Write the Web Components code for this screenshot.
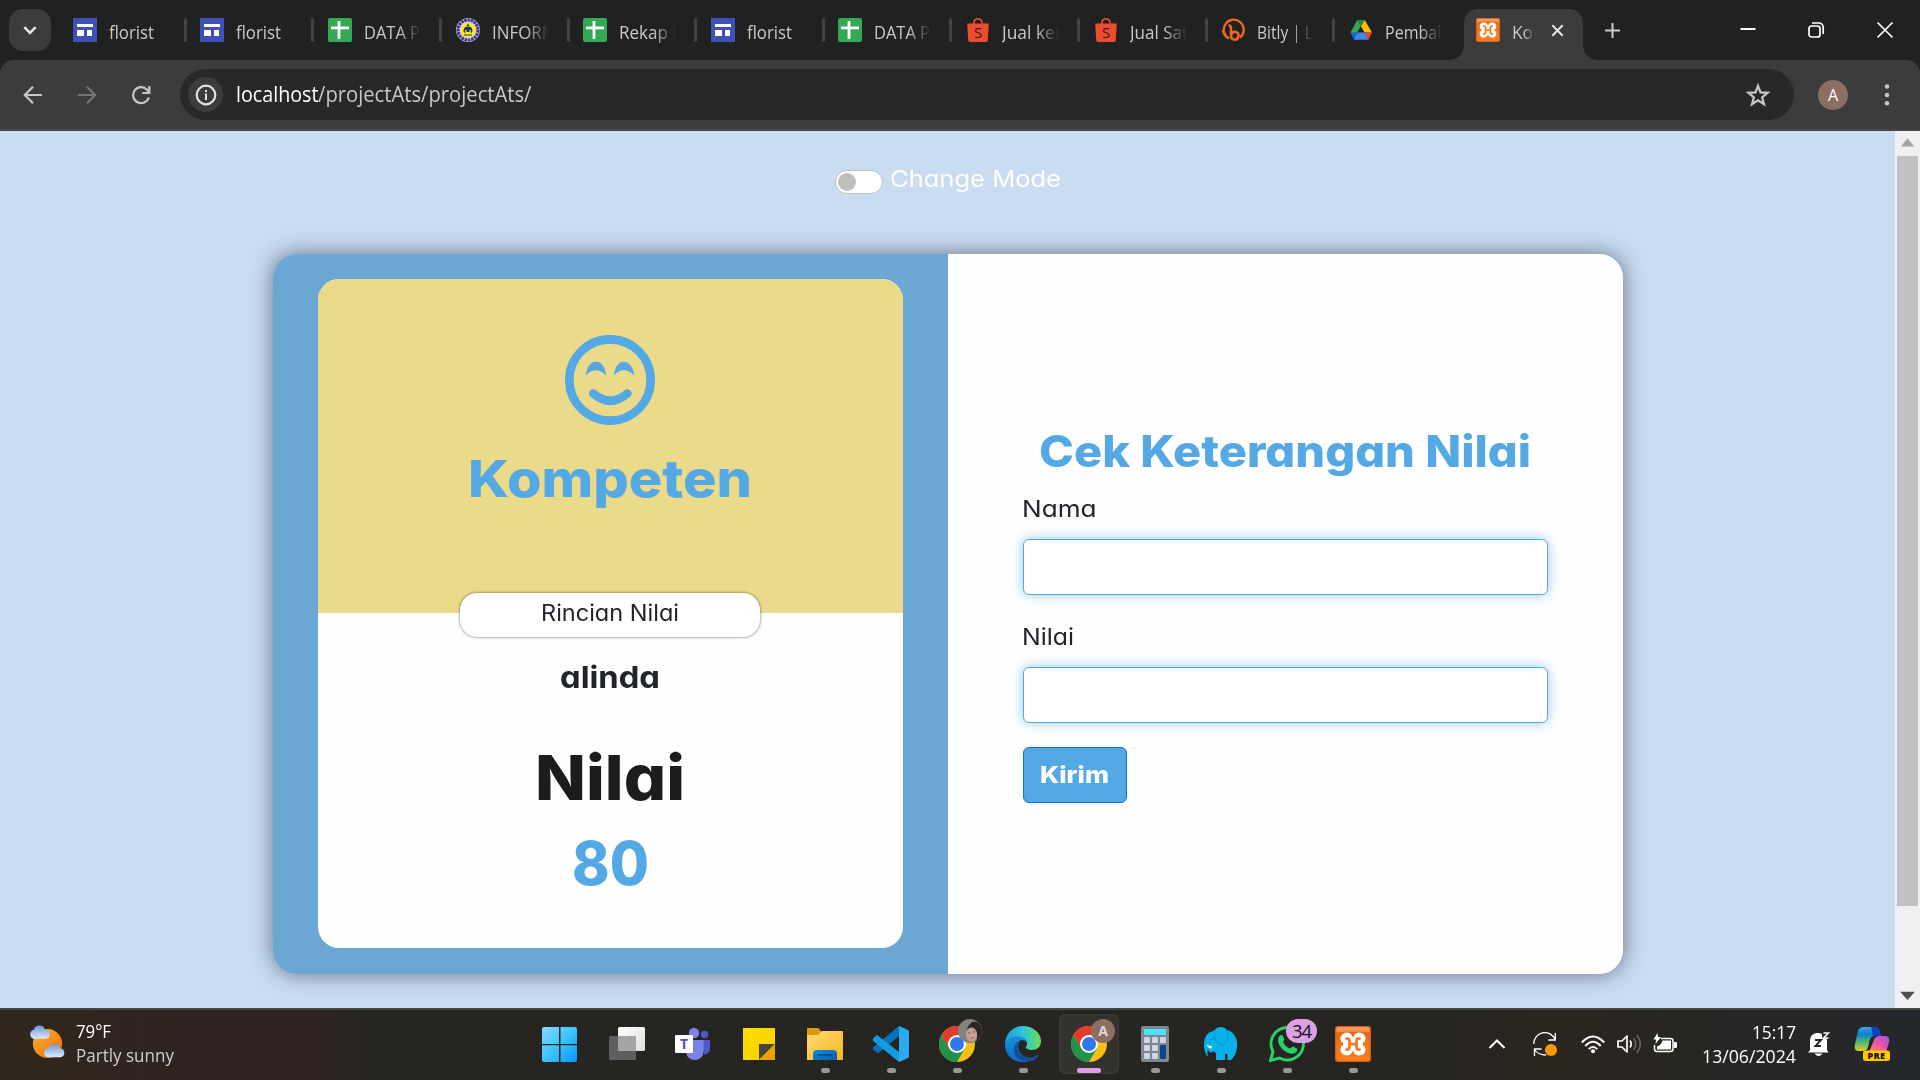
<!DOCTYPE html>
<html lang="id">
<head>
<meta charset="utf-8">
<title>Kompeten</title>
<style>
html,body{margin:0;padding:0;overflow:hidden}
body{width:1920px;height:1080px;font-family:"Open Sans","Noto Sans",sans-serif}
</style>
</head>
<body>
<desktop-screen></desktop-screen>
<script>
const define=(name,html,setup)=>customElements.define(name,class extends HTMLElement{
  connectedCallback(){
    if(this.shadowRoot)return;
    this.attachShadow({mode:'open'}).innerHTML=typeof html==='function'?html(this):html;
    if(setup)setup(this);
  }
});

const ICONS={
sites:[24,24,`<path fill="#4050b5" d="M0 0h24v24H0z"/><path fill="#fff" d="M4 6h16v3H4zM4 12h7v6H4zM14 12h5v6h-5z"/>`],
sheets:[24,24,`<rect width="24" height="24" rx="2" fill="#34a853"/><path fill="#fff" d="M9.600 3h2.800v18H9.600zM3 8.600h18v2.600H3z"/>`],
seal:[24,24,`<circle cx="12" cy="12" r="12" fill="#d9d4e6"/><circle cx="12" cy="12" r="10" fill="none" stroke="#41328c" stroke-width="3.2" stroke-dasharray="2.6 .7"/><circle cx="12" cy="12" r="7.3" fill="#f4ef10"/><path d="M7.500 13.500c0-4 2-5 4.500-5s4.500 1 4.500 5l-1.700 2v-3.500h-1.300v2h-3v-2H9.200v3.500zM12 5.500l1.500 2.500h-3z" fill="#28306b"/><path stroke="#28306b" d="M8 17h8"/>`],
shop:[24,24,`<path d="M7.500 6.500C8-1 16-1 16.500 6.500" fill="none" stroke="#ee4d2d" stroke-width="1.600"/><path d="M1.200 5.500h21.600l-1 16.600a2 2 0 0 1-2 1.900H4.200a2 2 0 0 1-2-1.900z" fill="#ee4d2d"/><text x="12" y="20" text-anchor="middle" font-family="Open Sans" font-size="15" fill="#27201f">S</text>`],
bit:[24,24,`<path d="M8 20.500A10 10 0 1 1 19 19.500M5.800 19.500C3.500 17 2 15 2 12" fill="none" stroke="#f26522" stroke-width="2.300"/><path d="M7.500 7.500c2.500-.5 2.600 2 2.500 5v5c0 5 6 5.500 7.300 1.500 1.500-5-4.300-7-7-3" fill="none" stroke="#f26522" stroke-width="2.500"/>`],
drive:[24,24,`<path fill="#34a853" d="m8.200 2 3.800 6.300-6.300 10L1.500 14.500z"/><path fill="#23883e" d="M8.200 2h7.500L12 8.300z"/><path fill="#fbbc04" d="M15.700 2 23 14.500h-7.400L12 8.300z"/><path fill="#4285f4" d="M8.200 14.500h7.400l3.800 7.300H4.900z"/><path fill="#1967d2" d="M1.500 14.500h6.700l-3.300 7.300z"/><path fill="#ea4335" d="M15.600 14.500H23l-3.600 7.300z"/>`],
xampp:[36,36,`<defs><linearGradient id="g" x2="0" y2="1"><stop stop-color="#f5a36b"/><stop offset=".14" stop-color="#f08a42"/><stop offset=".15" stop-color="#e56a16"/><stop offset="1" stop-color="#ff7f1f"/></linearGradient></defs><rect width="36" height="36" rx="3" fill="#d95f10"/><rect x="1.300" y="1.300" width="33.400" height="33.400" rx="2" fill="url(#g)"/><g fill="#fff"><circle cx="11.700" cy="12.800" r="6.200"/><circle cx="24.300" cy="12.800" r="6.200"/><circle cx="11.700" cy="23.400" r="6.200"/><circle cx="24.300" cy="23.400" r="6.200"/><path d="M8 13h20v11H8z"/></g><g fill="#f9771f"><path d="M4.500 18.200 8 15.900v4.600zM31.500 18.200 28 15.900v4.600z"/></g><path d="M11.500 12.600q2.800-.6 3 2.400v6.200q-.2 3-3 2.400M24.500 12.600q-2.800-.6-3 2.400v6.200q.2 3 3 2.400M14.500 18.100h7" fill="none" stroke="#f9771f" stroke-width="2.700" stroke-linecap="round"/>`],
down:[16,16,`<path d="m3 5.500 5 5 5-5" fill="none" stroke="#e3e3e3" stroke-width="2.300"/>`],
x:[16,16,`<path d="m2.500 2.500 11 11m0-11-11 11" fill="none" stroke="#e3e3e3" stroke-width="2.200"/>`],
plus:[18,18,`<path d="M9 1v16M1 9h16" fill="none" stroke="#c7c7c7" stroke-width="2.200"/>`],
min:[18,18,`<path d="M1.500 8h15" stroke="#fff" stroke-width="2"/>`],
restore:[18,18,`<rect x="2" y="5" width="11" height="11" rx="2.500" fill="none" stroke="#fff" stroke-width="1.700"/><path d="M5 2h7a4.200 4.200 0 0 1 4.200 4.200V13" fill="none" stroke="#fff" stroke-width="1.700"/>`],
close:[18,18,`<path d="m1.500 1.500 15 15m0-15-15 15" fill="none" stroke="#fff" stroke-width="1.700"/>`],
back:[20,20,`<path d="M19 10H2.500M10 1.800 1.800 10l8.200 8.200" fill="none" stroke="#c7c7c7" stroke-width="2.200"/>`],
fwd:[20,20,`<path d="M1 10h16.500M10 1.800l8.200 8.200-8.200 8.200" fill="none" stroke="#757575" stroke-width="2.200"/>`],
reload:[20,20,`<path d="M17.800 12.500A8 8 0 1 1 16 4.700L18 7" fill="none" stroke="#c7c7c7" stroke-width="2.200"/><path d="M18.300 1v7h-7" fill="none" stroke="#c7c7c7" stroke-width="2.200"/>`],
info:[22,22,`<circle cx="11" cy="11" r="9.300" fill="none" stroke="#e3e3e3" stroke-width="2.200"/><path d="M10 9.500h2V16h-2zM10 6h2v2h-2z" fill="#e3e3e3"/>`],
star:[24,24,`<path d="m12 2.800 2.500 6.600 7.100.4-5.500 4.500 1.900 6.900-6-3.900-6 3.900 1.900-6.900L2.400 9.800l7.100-.4z" fill="none" stroke="#c7c7c7" stroke-width="2.200"/>`],
dots:[6,24,`<g fill="#c7c7c7"><circle cx="3" cy="3.500" r="2.300"/><circle cx="3" cy="12" r="2.300"/><circle cx="3" cy="20.300" r="2.300"/></g>`],
smile:[90,90,`<circle cx="45" cy="45" r="40.700" fill="none" stroke="#54a9e5" stroke-width="8.700"/><path d="M21 40.500c1-18 18.500-18.500 20.300.3-5.500-7.500-15-7.500-20.300-.3zM49 40.500c1-18 18.500-18.500 20.300.3-5.500-7.500-15-7.500-20.300-.3z" fill="#54a9e5"/><path d="M28.300 58.500q17 14.500 34 0" fill="none" stroke="#54a9e5" stroke-width="8.700" stroke-linecap="round"/>`],
weather:[38,36,`<defs><linearGradient id="a" x2="1" y2="1"><stop stop-color="#f6b62b"/><stop offset="1" stop-color="#f06a0c"/></linearGradient><linearGradient id="b" x2="0" y2="1"><stop stop-color="#6f95d9"/><stop offset="1" stop-color="#dbe8fb"/></linearGradient></defs><circle cx="19" cy="19" r="15" fill="url(#a)"/><path d="M5 14a4.700 4.700 0 0 1 0-9.200A6 6 0 0 1 16.500 5 4.600 4.600 0 0 1 18 14z" fill="url(#b)"/><path d="M20 33a4.600 4.600 0 0 1 0-9.200 6 6 0 0 1 11.500.2A4.600 4.600 0 0 1 33 33z" fill="url(#b)"/>`],
win:[36,36,`<defs><linearGradient id="a" gradientUnits="userSpaceOnUse" x2="36" y2="36"><stop stop-color="#87dcff"/><stop offset=".5" stop-color="#3cc4fd"/><stop offset="1" stop-color="#0393fb"/></linearGradient></defs><path fill="url(#a)" d="M2 1h15v17H0V3a2 2 0 0 1 2-2zM18.500 1H33a2 2 0 0 1 2 2v15H18.500zM0 19.300h17V36H2a2 2 0 0 1-2-2zM18.500 19.300H35V34a2 2 0 0 1-2 2H18.500z"/>`],
task:[36,36,`<defs><linearGradient id="a" x2="1" y2="1"><stop stop-color="#fff"/><stop offset="1" stop-color="#dedede"/></linearGradient></defs><rect x="9" y="1" width="27" height="24" rx="1.500" fill="url(#a)"/><rect y="10" width="27" height="24" rx="1.500" fill="#5f5f5f"/><path d="M9 10h18v15H9z" fill="#a5a5a5"/>`],
teams:[36,36,`<circle cx="19" cy="7" r="5.200" fill="#7b83eb"/><circle cx="29.500" cy="8.500" r="3.700" fill="#5059c9"/><path d="M26 14h9v8.500c0 4-3 6-6 6z" fill="#5059c9"/><path d="M11 14h17.500v11c0 12-17.500 12-17.500 0z" fill="#7b83eb"/><rect y="9" width="18" height="18" rx="1" fill="#fff"/><text x="9" y="23" text-anchor="middle" font-family="Open Sans" font-weight="700" font-size="14" fill="#4b53bc">T</text>`],
sticky:[36,36,`<defs><linearGradient id="a" x2="1" y2="1"><stop stop-color="#ffe100"/><stop offset="1" stop-color="#f3cb00"/></linearGradient></defs><path fill="url(#a)" d="M2 2h32v32H2z"/><path d="M18 18h16L18 34z" fill="#494437"/><path d="M34 18v16H18z" fill="#eda100"/>`],
folder:[36,36,`<defs><linearGradient id="a" x2="1" y2="1"><stop stop-color="#ffdc70"/><stop offset="1" stop-color="#f8b520"/></linearGradient><linearGradient id="b" x2="1" y2="1"><stop stop-color="#1288df"/><stop offset="1" stop-color="#0460ad"/></linearGradient></defs><path d="M0 3q0-1 1-1h10l4 4v6H0z" fill="#dc9a08"/><path d="M0 9h11l4-4h20q1 0 1 1v27q0 1-1 1H0z" fill="url(#a)"/><path d="M6 34v-6q0-4 4-4h16q4 0 4 4v6z" fill="url(#b)"/><path d="M10.500 29h15" stroke="#074b8b" stroke-width="1.500"/>`],
code:[36,36,`<path d="M26 0v10L5 27.300 0 23.500v-2z" fill="#0b72b9"/><path d="M0 14.500v-2l4-3.500 22 17v10L.8 15.500z" fill="#159bdf"/><path d="m26 0 9 4q1 .5 1 1.500v25q0 1-1 1.500l-9 4z" fill="#29aaf2"/>`],
chrome:[36,36,`<circle cx="18" cy="18" r="18" fill="#f7bf16"/><path d="M18 9h15.600A18 18 0 0 0 2.400 9l7.800 13.500z" fill="#e33b2e"/><path d="m18 36 7.800-13.500L18 26l-7.800-3.500L2.400 9A18 18 0 0 0 18 36z" fill="#229149"/><circle cx="18" cy="18" r="9" fill="#fff"/><circle cx="18" cy="18" r="7" fill="#2f78ec"/>`],
edge:[36,36,`<defs><linearGradient id="a" x2="1" y2="0"><stop stop-color="#1c9ae0"/><stop offset=".5" stop-color="#31c3d8"/><stop offset="1" stop-color="#67df51"/></linearGradient><linearGradient id="b" x2="0" y2="1"><stop stop-color="#1892d8"/><stop offset="1" stop-color="#0d68c8"/></linearGradient></defs><path d="M0 17C1 6 9 0 18 0c10 0 18 7 18 15 0 6-4 9-9 9-5 0-7-2-6-3.500 3-4 0-8-5-8C9 12.500 3 15 0 19z" fill="url(#a)"/><path d="M0 18c1-5 7-8 12-8 6 0 10 3 10 7-1-2-4-3-6-3-4 2-4 10 0 14 4 4 10 5 15 2l3-1c-4 5-10 7-16 7C7 36 0 29 0 18z" fill="url(#b)"/><path d="M14 15c-3 4-2 10 2 14 4 3.500 10 3.500 15 1 3-2 2 1 0 3-8 5-22 2-22-9 0-4 2-8 5-9z" fill="#104e9c"/>`],
calc:[36,36,`<rect x="4" width="28" height="36" rx="2" fill="#7d8790"/><path fill="#4be3f8" d="M7 3h22v6H7z"/><g fill="#d0d5e3"><rect x="7" y="11" width="6" height="6" rx="1"/><rect x="15" y="11" width="6" height="6" rx="1"/><rect x="23" y="11" width="6" height="6" rx="1"/><rect x="7" y="19" width="6" height="6" rx="1"/><rect x="15" y="19" width="6" height="6" rx="1"/><rect x="7" y="27" width="6" height="6" rx="1"/><rect x="15" y="27" width="6" height="6" rx="1"/></g><rect x="23" y="19" width="6" height="14" rx="1" fill="#0e4587"/>`],
elephant:[36,36,`<path d="M4 30C0 24 0 14 4 8.500 6 6 9 5.500 11 4.500c4-4.500 10-4.500 13-.5 7 1 11 9 10 17-.5 5-2 9-6 13h-3.500v-6h-2.500v6H13v-7l-3-2-1 1.500c-2 0-3.500-1-4-3.500-1 3-.5 5 0 7z" fill="#0ab0ec"/><path d="M11.500 5c-2 6 2 13.500 8 14 5-2 6.500-8 4.500-15M7 14q3-3 5 0" fill="none" stroke="#078fc7"/><path d="M3.500 18q3 3 5.500 1.500l-.5 3q-3 .5-5-4.500z" fill="#fff"/>`],
wa:[36,36,`<path d="M1.500 34.500 4 25.500a16.200 16.200 0 1 1 6.500 6.500z" fill="none" stroke="#25d366" stroke-width="2.900"/><path d="M11 9.500c1.500-1 2.500-.5 3 .7l1.300 3c.4 1-1.500 2.200-1.200 3 1.500 3.400 4.200 5.400 7 6.300 1 .2 2-2.200 3-1.900l3.600 1.800c1.500.7 0 4-2 4.700-7.700 3.200-18-7.500-16.500-14 .3-1.500.8-2.800 1.800-3.600z" fill="#25d366"/>`],
chev:[18,18,`<path d="m1.500 13 7.500-7.500 7.500 7.500" fill="none" stroke="#fff" stroke-width="2.100"/>`],
sync:[24,24,`<path d="M.8 12A11 11 0 0 1 22 7.500M22.300 1v7h-7M1.500 24v-7h7M1.500 17.500Q5 23 13 23" fill="none" stroke="#fff" stroke-width="1.300"/><circle cx="18" cy="18" r="6" fill="#ff9800"/>`],
wifi:[24,20,`<g fill="none" stroke="#fff" stroke-width="1.900"><path d="M.8 8.500q11.200-12 22.400 0M4.300 12q7.700-8.500 15.400 0M7.800 15.200q4.200-4.600 8.400 0"/></g><circle cx="12" cy="17.200" r="2" fill="#fff"/>`],
vol:[24,20,`<path d="M1 7h4l5-5v16l-5-5H1z" fill="none" stroke="#fff" stroke-width="1.700" stroke-linejoin="round"/><path d="M13 6.500q2.500 3.500 0 7" fill="none" stroke="#fff" stroke-width="1.600"/><path d="M16.500 4q4.500 6 0 12M20 1q6.500 9 0 18" fill="none" stroke="#66645f" stroke-width="1.600"/>`],
bat:[24,20,`<path d="M8 5.500h9.500q2.500 0 2.500 2.500v8q0 2.500-2.500 2.500H4q-2.500 0-2.500-2.500v-4" fill="none" stroke="#fff" stroke-width="1.500"/><path d="M9.500 7.500h8.500V16.500H4V13.500q4-1 5.500-6z" fill="#fff"/><path d="M21 9h1.500q1.500 0 1.500 1v4q0 1-1.500 1H21zM4.500 0 .5 6.500h2.700L2.500 11 8 4H5z" fill="#fff"/>`],
bell:[22,24,`<path d="M2 18V9C2 3 6 1 10 1c5 0 9 3 9 8v9l1.500 2.500H0z" fill="#fff"/><path d="M6.500 21.500h8q-4 5-8 0z" fill="#fff"/><path d="M13.500 0h8v6.500h-7z" fill="#242628"/><path d="M15.500 1h5l-5 5h5" fill="none" stroke="#fff" stroke-width="1.500"/><path d="M7 8h6l-5.500 6H13" fill="none" stroke="#242628" stroke-width="1.900"/>`],
copilot:[36,36,`<defs><linearGradient id="a" x2="0" y2="1"><stop stop-color="#3aa8e6"/><stop offset=".3" stop-color="#0d7dcf"/><stop offset=".6" stop-color="#4ab576"/><stop offset="1" stop-color="#ddd02b"/></linearGradient><linearGradient id="b" x1="1" x2="0" y2="1"><stop stop-color="#a34df0"/><stop offset=".5" stop-color="#e957a3"/><stop offset="1" stop-color="#f98a48"/></linearGradient></defs><path d="M9 1h12c3 0 4 3 5 6l1 3h-7c-3 0-4 3-5 7l-1 4c-1 3-3 4-5 4H4c-3 0-4-3-3-7L4 5c1-3 3-4 5-4z" fill="url(#a)"/><path d="M17 1h4c3 0 4 3 5 6l1 3h-8z" fill="#1240c5"/><path d="M25 10h6c3 0 5 2 4 6l-3 10H15l5-12c1-3 3-4 5-4z" fill="url(#b)"/><rect x="9" y="24.500" width="27" height="10.500" rx="2.500" fill="#ffc800"/><text x="22.500" y="33" text-anchor="middle" font-family="Open Sans" font-weight="800" font-size="9" letter-spacing=".4" fill="#111">PRE</text>`],
photo:[24,24,`<defs><clipPath id="c"><circle cx="12" cy="12" r="12"/></clipPath></defs><g clip-path="url(#c)"><path fill="#858181" d="M0 0h24v24H0z"/><path fill="#2b2526" d="M14 3q8-2 10 7v14h-7q4-6 1-12-3-3-7-1-2 4-1 7-4-8 4-15z"/><ellipse cx="13.500" cy="15.500" rx="5.500" ry="7" fill="#c79f92"/><path fill="#6a4f4d" d="M10 13.500h2.500v1H10zM15 12.500h2v1h-2z"/><path fill="#a55b5e" d="M12.500 18.500h3.500v1h-3.500z"/></g>`],
up:[17,17,`<path d="m4 10.500 4.500-5.500 4.500 5.500z" fill="#a3a3a3"/>`],
dn:[17,17,`<path d="m3.500 6 5 5.500 5-5.500z" fill="#505050"/>`]
};
define('app-icon',el=>{
  const [w,h,body]=ICONS[el.getAttribute('name')];
  const W=+(el.getAttribute('size')||w),H=W*h/w;
  return `<style>:host{display:block;flex:none;width:${W}px;height:${H}px}svg{display:block}</style><svg width="${W}" height="${H}" viewBox="0 0 ${w} ${h}">${body}</svg>`;
});

define('browser-tab',el=>{
  const act=el.hasAttribute('active');
  return `<style>
  :host{display:flex;position:relative;flex:none;align-items:center;box-sizing:border-box;width:${act?119:127.6}px;height:51px;padding-left:12px;padding-bottom:9px;${act?'background:#3c3c3c;border-radius:14px 14px 0 0':''}}
  .t{margin:3px 0 0 12px;width:${act?23:57}px;height:26px;line-height:26px;overflow:hidden;font-size:17.500px;color:#c9c9c9;${el.hasAttribute('fade')?`-webkit-mask-image:linear-gradient(90deg,#000 ${act?50:60}%,transparent 100%)`:''}}
  .s{width:3px;height:24px;border-radius:2px;background:#434343;margin-left:18px}
  .x{margin-left:15px}
  .c{position:absolute;bottom:0;width:14px;height:14px}
  .l{left:-14px;background:radial-gradient(circle at 0 0,transparent 13.500px,#3c3c3c 14px)}
  .r{right:-14px;background:radial-gradient(circle at 100% 0,transparent 13.500px,#3c3c3c 14px)}
  </style><app-icon name="${el.getAttribute('icon')}" size="24"></app-icon>
  <div class="t"><fit-text w="${el.getAttribute('w')}"><slot></slot></fit-text></div>
  ${act?'<app-icon class="x" name="x" size="15"></app-icon><i class="c l"></i><i class="c r"></i>':el.hasAttribute('last')?'':'<i class="s"></i>'}`;
});

define('tab-strip',`<style>
  :host{display:flex;height:60px;box-sizing:border-box;padding-top:9px;background:#202221}
  .m{display:flex;align-items:center;justify-content:center;width:42px;height:42px;border-radius:14px;background:#3c3c3c;margin:0 9.800px 0 9px}
  .tools{display:flex;align-items:center;height:42px;flex:1}
  </style><div class="m"><app-icon name="down" size="18"></app-icon></div>
  <browser-tab icon="sites" w="45">florist</browser-tab>
  <browser-tab icon="sites" w="45">florist</browser-tab>
  <browser-tab icon="sheets" w="56" fade>DATA P</browser-tab>
  <browser-tab icon="seal" w="65" fade>INFORM</browser-tab>
  <browser-tab icon="sheets" w="58" fade>Rekap I</browser-tab>
  <browser-tab icon="sites" w="45">florist</browser-tab>
  <browser-tab icon="sheets" w="56" fade>DATA P</browser-tab>
  <browser-tab icon="shop" w="60" fade>Jual ker</browser-tab>
  <browser-tab icon="shop" w="58" fade>Jual Sat</browser-tab>
  <browser-tab icon="bit" w="56" fade>Bitly | L</browser-tab>
  <browser-tab icon="drive" w="62" fade last>Pembah</browser-tab>
  <browser-tab icon="xampp" w="37" fade active>Kom</browser-tab>
  <div class="tools"><app-icon name="plus" size="17" style="margin-left:21px"></app-icon><app-icon name="min" style="margin-left:118px"></app-icon><app-icon name="restore" style="margin-left:50px"></app-icon><app-icon name="close" style="margin-left:51px"></app-icon></div>`);

define('address-bar',`<style>
  :host{display:block;background:#202221}
  .bar{display:flex;align-items:center;height:71px;box-sizing:border-box;padding:0 0 0 23px;background:#3c3c3c;border-bottom:2px solid #464646;border-radius:14px 14px 0 0}
  .omni{display:flex;align-items:center;width:1614px;height:51px;box-sizing:border-box;border-radius:26px;background:#282828;margin-left:29px;padding:0 24px 0 8px}
  .i{display:flex;align-items:center;justify-content:center;width:35px;height:35px;border-radius:50%;background:#3c3c3c;margin-right:12.500px}
  .u{flex:1;display:flex;font-size:21px;line-height:38px;margin-top:-2px;color:#c7c7c7}
  .a{width:30px;height:30px;border-radius:50%;background:#8d6e63;color:#fff;font-size:16px;line-height:30px;text-align:center;margin:0 36px 0 24px}
  </style><div class="bar"><app-icon name="back"></app-icon><app-icon name="fwd" style="margin-left:34px"></app-icon><app-icon name="reload" style="margin-left:34px"></app-icon>
  <div class="omni"><div class="i"><app-icon name="info"></app-icon></div><div class="u"><fit-text w="82.5" style="color:#fff">localhost</fit-text><fit-text w="213.5">/projectAts/projectAts/</fit-text></div><app-icon name="star"></app-icon></div>
  <div class="a">A</div><app-icon name="dots"></app-icon></div>`);

define('mode-switch',`<style>
  :host{display:flex;align-items:flex-end;height:30px;gap:7px;color:#fff;font-size:23.500px;line-height:30px}
  i{box-sizing:border-box;width:48px;height:24px;border:1px solid #bfbfbf;border-radius:12px;background:#fff;display:flex;align-items:center;padding-left:2.500px}
  i::before{content:"";width:18px;height:18px;border-radius:50%;background:#bfbfbf}
  </style><i></i><fit-text w="171"><slot></slot></fit-text>`);

define('result-card',`<style>
  :host{display:block;width:585px;height:669px;border-radius:21px;overflow:hidden;background:#fefefe}
  .top{display:flex;flex-direction:column;align-items:center;box-sizing:border-box;height:334px;padding-top:56px;background:#ebda8a}
  .k{margin-top:21px;font-size:51.500px;line-height:64px;font-weight:800;color:#54a9e5}
  .low{display:flex;flex-direction:column;align-items:center}
  .pill{position:relative;margin-top:-20px;width:300px;height:43.500px;line-height:40px;text-align:center;border-radius:17px;background:#fff;font-size:22.500px;box-shadow:0 0 3px rgba(0,0,0,.6)}
  .n{margin-top:22px;font-size:30px;line-height:37px;font-weight:750}
  .h{margin-top:46.500px;font-size:62.500px;line-height:70px;font-weight:800;color:#1e1b1c}
  .v{margin-top:15.500px;font-size:61px;line-height:70px;font-weight:800;color:#54a9e5}
  </style><div class="top"><app-icon name="smile"></app-icon><fit-text class="k" w="284"><slot name="status"></slot></fit-text></div>
  <div class="low"><div class="pill"><fit-text w="138">Rincian Nilai</fit-text></div><fit-text class="n" w="100"><slot name="name"></slot></fit-text><fit-text class="h" w="150">Nilai</fit-text><fit-text class="v" w="77"><slot name="score"></slot></fit-text></div>`);

define('form-field',el=>`<style>
  :host{display:flex;flex-direction:column;align-items:flex-start}
  label{height:36px;line-height:37px;font-size:23.500px;margin:0 0 13px -1px}
  input{box-sizing:border-box;width:100%;height:56px;border:1px solid #54a9e5;border-radius:6px;background:#fff;box-shadow:0 0 12px rgba(84,169,229,.62);padding:0 18px;outline:0;margin:0}
  </style><label><fit-text w="${el.getAttribute('w')}"><slot></slot></fit-text></label><input>`);

define('grade-form',`<style>
  :host{display:flex;flex-direction:column;align-items:center;box-sizing:border-box;width:675px;padding:170px 75px 0;background:#fefefe}
  .h{font-size:44px;line-height:54px;font-weight:800;color:#54a9e5;margin-bottom:12px}
  form-field{width:525px;margin-bottom:23px}
  button{align-self:flex-start;margin:1px 0 0;box-sizing:border-box;width:104px;height:56px;border:1px solid #0d6efd;border-radius:6px;background:#54a9e5;color:#fff;font:800 23px/53px Inter,sans-serif;font-feature-settings:inherit;padding:0}
  </style><fit-text class="h" w="492">Cek Keterangan Nilai</fit-text>
  <form-field w="74.500">Nama</form-field><form-field w="52">Nilai</form-field><button><fit-text w="69">Kirim</fit-text></button>`);

define('scroll-bar',`<style>
  :host{display:flex;flex-direction:column;align-items:center;justify-content:space-between;width:25px;height:877px;background:#f0f0f0}
  div{display:flex;flex-direction:column;align-items:center}
  i{width:21px;height:750px;background:#c1c1c1}
  </style><div><app-icon name="up" size="25"></app-icon><i></i></div><app-icon name="dn" size="25"></app-icon>`);

define('web-page',`<style>
  :host{display:flex;height:877px;background:#c9dcf2;color:#212529;font-family:Inter,sans-serif;font-feature-settings:"cv11","ss03"}
  main{flex:1;display:flex;flex-direction:column;align-items:center;padding-top:33px;box-sizing:border-box}
  .sh{border-radius:24px;margin-top:60px;box-shadow:0 0 22px rgba(40,50,65,.62)}
  .card{display:flex;width:1350px;height:720px;border-radius:24px;overflow:hidden}
  .left{box-sizing:border-box;width:675px;padding:25px 45px;background:#6aa7d2}
  </style><main><mode-switch>Change Mode</mode-switch>
  <div class="sh"><div class="card"><div class="left"><result-card><span slot="status">Kompeten</span><span slot="name">alinda</span><span slot="score">80</span></result-card></div><grade-form></grade-form></div></div></main><scroll-bar></scroll-bar>`);

define('task-item',el=>`<style>
  :host{display:flex;position:relative;flex-direction:column;align-items:center;box-sizing:border-box;width:60px;height:60px;margin:0 3px;padding-top:12px;border-radius:7px;${el.hasAttribute('active')?'background:#33322e;box-shadow:inset 0 0 0 1.500px #3c3b37':''}}
  i{margin-top:6px;width:9px;height:5px;border-radius:3px;background:#999895}
  i.on{width:24px;background:#de9fe5}
  ::slotted(*){position:absolute}
  </style><app-icon name="${el.getAttribute('icon')}" size="36"></app-icon>${el.hasAttribute('active')?'<i class="on"></i>':el.hasAttribute('run')?'<i></i>':''}<slot></slot>`);

define('task-bar',`<style>
  :host{display:flex;box-sizing:border-box;height:72px;border-top:2px solid #464643;background:linear-gradient(90deg,#30281c 0,#30251e 130px,#302321 180px,#2f2422 320px,#272521 360px,#272521 1450px,#2a261f 1560px,#272624 1720px,#24272c 1920px);color:#fff;font-size:17.500px;line-height:24px;padding-top:4px}
  .w{display:flex;width:528px;box-sizing:border-box;padding:11px 0 0 29px}
  .w div{margin:-6px 0 0 10px;display:flex;flex-direction:column}
  .w div :last-child{color:#d0cdca}
  .apps{display:flex;width:858px}
  .badge{top:5px;left:29px;width:31px;height:24px;border-radius:12px;background:#de9fe5;color:#111;text-align:center;line-height:24px;font-size:18.500px;letter-spacing:-1px}
  .av{top:5px;left:32px;width:24px;height:24px;border-radius:50%;background:#8d6e63;color:#e0d5d1;text-align:center;font:700 14px/24px "Open Sans"}
  .tray{display:flex;align-items:center;height:60px}
  .clock{display:flex;flex-direction:column;align-items:flex-end;width:94px;margin:-1px 12px 0 25px;}
  </style><div class="w"><app-icon name="weather" size="37"></app-icon><div><fit-text w="35">79°F</fit-text><fit-text w="98">Partly sunny</fit-text></div></div>
  <div class="apps"><task-item icon="win" style="left:-1px"></task-item><task-item icon="task"></task-item><task-item icon="teams"></task-item><task-item icon="sticky"></task-item><task-item icon="folder" run></task-item><task-item icon="code" run></task-item>
  <task-item icon="chrome" run><app-icon name="photo" style="top:5px;left:31px"></app-icon></task-item><task-item icon="edge" run></task-item><task-item icon="chrome" active><span class="av">A</span></task-item><task-item icon="calc" run></task-item><task-item icon="elephant" run></task-item><task-item icon="wa" run><span class="badge">34</span></task-item><task-item icon="xampp" run></task-item></div>
  <div class="tray"><app-icon name="chev" style="margin-left:102px"></app-icon><app-icon name="sync" style="margin-left:27px"></app-icon><app-icon name="wifi" style="margin-left:24px"></app-icon><app-icon name="vol" style="margin-left:12px"></app-icon><app-icon name="bat" style="margin:-3px 0 0 12px"></app-icon>
  <div class="clock"><fit-text w="44">15:17</fit-text><fit-text w="94">13/06/2024</fit-text></div><app-icon name="bell"></app-icon><app-icon name="copilot" style="margin-left:24px"></app-icon></div>`);

define('desktop-screen',`<style>:host{display:flex;flex-direction:column;width:1920px;height:1080px;overflow:hidden}</style><tab-strip></tab-strip><address-bar></address-bar><web-page></web-page><task-bar></task-bar>`);

/* Text set to an exact advance width, whatever font is available. */
define('fit-text',`<style>:host{display:inline-block;white-space:nowrap;vertical-align:top;text-align:left}span{display:inline-block;transform-origin:0 50%;vertical-align:top}</style><span><slot></slot></span>`,el=>{
  const s=el.shadowRoot.querySelector('span'),w=+el.getAttribute('w'),n=s.getBoundingClientRect().width;
  el.style.width=w+'px';
  if(n)s.style.transform='scaleX('+(w/n)+')';
});
</script>
</body>
</html>
